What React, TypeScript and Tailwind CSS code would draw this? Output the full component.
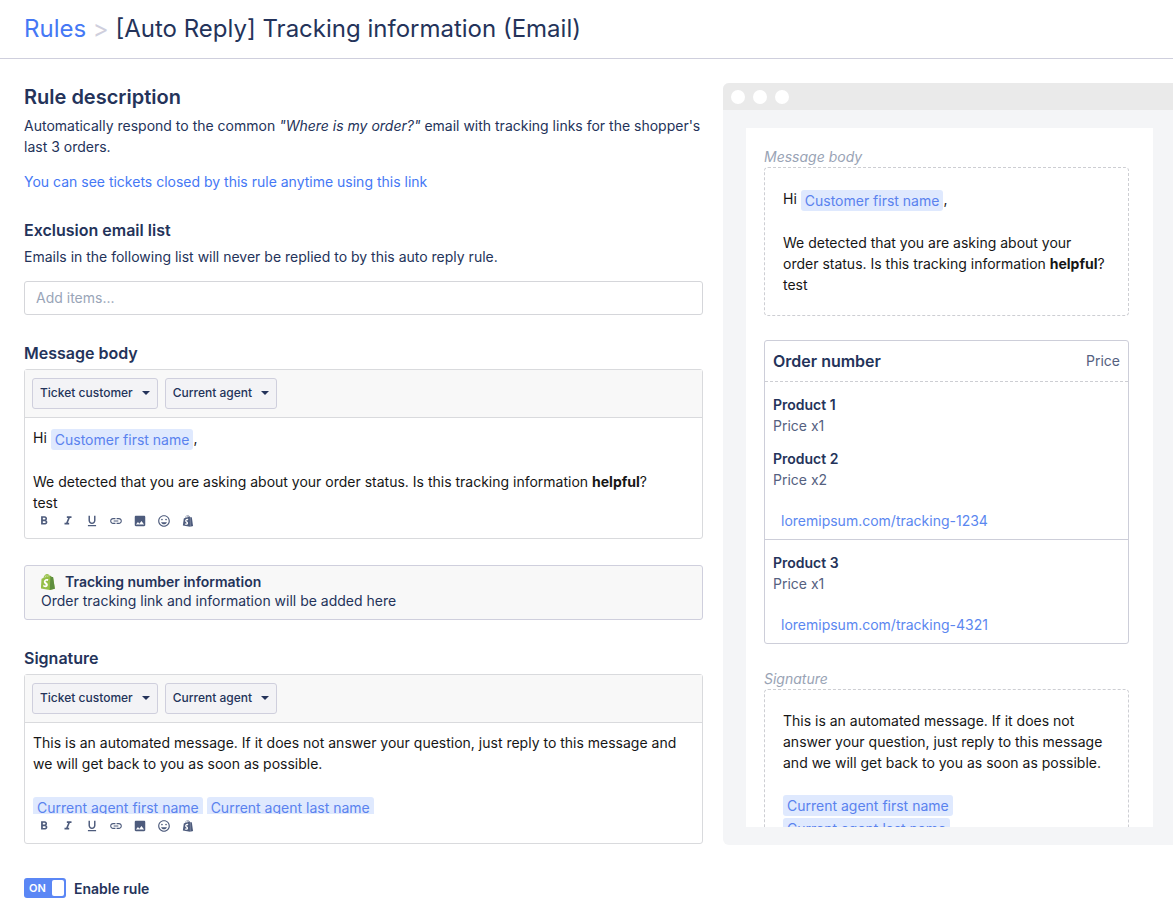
import { useState } from "react";
import type { ReactNode } from "react";
import { FaShopify } from "react-icons/fa";
import {
  MdFormatBold,
  MdFormatItalic,
  MdFormatUnderlined,
  MdImage,
  MdLink,
  MdOutlineInsertEmoticon,
} from "react-icons/md";

const tools = [
  { label: "Bold", Icon: MdFormatBold },
  { label: "Italic", Icon: MdFormatItalic },
  { label: "Underline", Icon: MdFormatUnderlined },
  { label: "Insert link", Icon: MdLink },
  { label: "Insert image", Icon: MdImage },
  { label: "Insert emoji", Icon: MdOutlineInsertEmoticon },
  { label: "Insert Shopify product", Icon: FaShopify },
];

function Variable({ children }: { children: ReactNode }) {
  return (
    <span className="inline-block rounded-[3px] bg-[#dfe9fe] px-1 align-middle whitespace-nowrap text-[#5a82ee]">
      {children}
    </span>
  );
}

function MenuButton({ children }: { children: ReactNode }) {
  return (
    <button
      type="button"
      aria-haspopup="menu"
      className="flex h-[31px] items-center gap-[9px] rounded-[3px] border border-[#cfcfdd] bg-[#f3f3f6] px-[7px] pb-0.5 text-xs font-medium text-[#24335a]"
    >
      {children}
      <svg viewBox="0 0 8 4" className="h-1 w-2" fill="currentColor" aria-hidden="true">
        <path d="M0 0h8L4 4z" />
      </svg>
    </button>
  );
}

function Editor({ id, title, children }: { id: string; title: string; children: ReactNode }) {
  return (
    <section className="mt-[26px]">
      <h2 id={id} className="text-base leading-6 font-semibold">
        {title}
      </h2>
      <div className="mt-1 rounded-[3px] border border-[#d9dadd]">
        <div className="flex gap-[7px] border-b border-[#d9dadd] bg-[#f8f8f8] px-[7px] py-2">
          <MenuButton>Ticket customer</MenuButton>
          <MenuButton>Current agent</MenuButton>
        </div>
        <div
          role="textbox"
          aria-multiline="true"
          aria-labelledby={id}
          contentEditable
          suppressContentEditableWarning
          className="h-[91px] overflow-hidden px-2 pt-[9px] text-[#161616] outline-none"
        >
          {children}
        </div>
        <div className="flex px-[7px] pb-[5px] text-[#4d5b7c]">
          {tools.map(({ label, Icon }) => (
            <button key={label} type="button" aria-label={label} className="flex size-6 items-center justify-center">
              <Icon className={label.includes("Shopify") ? "size-3" : "size-[14px]"} />
            </button>
          ))}
        </div>
      </div>
    </section>
  );
}

function ShopifyBag() {
  return (
    <svg viewBox="0 0 110 124" className="h-4 w-[14px]" aria-hidden="true">
      <path
        fill="#95bf47"
        d="M95 24c0-1-1-1-1-1l-10-1-8-8c-1-1-2-1-3-1l-4 1C66 7 62 1 54 1h-1C51-1 48-1 46 0 30 0 22 20 19 30L8 34c-3 1-3 1-4 4L-1 112l70 12 40-9z"
      />
      <path fill="#5e8e3e" d="M94 23l-10-1-8-8c-1-1-1-1-2-1l-5 111 40-9L95 24z" />
      <path
        d="M58 39l-5 15s-4-2-9-2c-8 0-8 5-8 6 0 7 18 9 18 25 0 12-8 20-18 20-13 0-19-8-19-8l3-11s7 6 12 6c4 0 5-3 5-5 0-9-15-9-15-23 0-12 8-24 25-24 7 0 11 1 11 1z"
        fill="#fff"
      />
      <path
        fill="#fff"
        fillOpacity="0.5"
        d="M26 28c4-12 11-20 20-21-4 4-7 10-9 18zM43 23c2-8 5-12 8-15 2 3 2 7 2 12zM58 7c4 1 5 5 7 9l-6 2c0-4 0-8-1-11z"
      />
    </svg>
  );
}

function PreviewBox({ title, children }: { title: string; children: ReactNode }) {
  return (
    <section>
      <h3 className="text-[#99a3b5] italic">{title}</h3>
      <div className="rounded border border-dashed border-[#cdced3] px-[18px] py-5 text-[#161616]">{children}</div>
    </section>
  );
}

function Product({ name, price }: { name: string; price: string }) {
  return (
    <div>
      <div className="font-semibold">{name}</div>
      <div className="text-[#55617f]">{price}</div>
    </div>
  );
}

function Shipment({ link, children }: { link: string; children: ReactNode }) {
  return (
    <div className="border-b border-[#cdced9] px-2 pt-3 pb-2 last:border-b-0">
      <div className="flex flex-col gap-3">{children}</div>
      <a href="#tracking" className="mt-5 block pl-2 text-[#5b87f0]">
        {link}
      </a>
    </div>
  );
}

function MessageBody() {
  return (
    <>
      <div>
        Hi <Variable>Customer first name</Variable>,
      </div>
      <br />
      <div>
        We detected that you are asking about your order status. Is this tracking information{" "}
        <b className="font-bold">helpful</b>?
      </div>
      <div>test</div>
    </>
  );
}

function SignatureBody() {
  return (
    <>
      <div>
        This is an automated message. If it does not answer your question, just reply to this message and we will get
        back to you as soon as possible.
      </div>
      <br />
      <div>
        <Variable>Current agent first name</Variable> <Variable>Current agent last name</Variable>
      </div>
    </>
  );
}

export default function App() {
  const [enabled, setEnabled] = useState(true);

  return (
    <div className="bg-white font-['Inter','Liberation_Sans',sans-serif] text-[14px] leading-[21px] text-[#24335a]">
      <header className="border-b border-[#cfcfdd] px-6 py-[11px]">
        <h1 className="text-2xl leading-9">
          <a href="#rules" className="text-[#4578f5]">
            Rules
          </a>{" "}
          <span className="text-[#cfcfdd]">&gt;</span> [Auto Reply] Tracking information (Email)
        </h1>
      </header>

      <main className="grid grid-cols-[679fr_450fr] gap-5 pt-6 pb-3 pl-6">
        <div className="min-w-0">
          <h2 className="text-xl leading-7 font-semibold">Rule description</h2>
          <p className="mt-1">
            Automatically respond to the common <i>"Where is my order?"</i> email with tracking links for the shopper's
            last 3 orders.
          </p>
          <a href="#tickets" className="mt-[14px] block text-[#4578f5]">
            You can see tickets closed by this rule anytime using this link
          </a>

          <h2 className="mt-[26px] text-base leading-6 font-semibold">
            <label htmlFor="exclusions">Exclusion email list</label>
          </h2>
          <p className="mt-1">Emails in the following list will never be replied to by this auto reply rule.</p>
          <input
            id="exclusions"
            type="text"
            placeholder="Add items..."
            className="mt-[14px] block h-[34px] w-full rounded-[3px] border border-[#d5d6da] px-[11px] pb-0.5 outline-none placeholder:text-[#99a5b8]"
          />

          <Editor id="message-body" title="Message body">
            <MessageBody />
          </Editor>

          <div className="mt-[26px] rounded-[3px] border border-[#cfcfdd] bg-[#f8f8f8] px-4 pt-[6px] pb-[9px] leading-[19px]">
            <div className="flex items-center gap-[10px] font-semibold">
              <ShopifyBag />
              Tracking number information
            </div>
            <p>Order tracking link and information will be added here</p>
          </div>

          <Editor id="signature" title="Signature">
            <SignatureBody />
          </Editor>

          <label className="mt-[34px] flex h-5 w-fit items-center gap-2 font-semibold">
            <input
              type="checkbox"
              role="switch"
              className="peer sr-only"
              checked={enabled}
              onChange={(e) => setEnabled(e.target.checked)}
            />
            <span className="flex h-5 w-[42px] items-center justify-between rounded-[3px] bg-[#5b87f5] pr-0.5 pl-[5px] text-[11px] text-white peer-focus-visible:ring-2">
              {enabled ? "ON" : "OFF"}
              <span className="h-4 w-3 rounded-[2px] bg-white" />
            </span>
            Enable rule
          </label>
        </div>

        <aside aria-label="Preview" className="min-w-0 self-start overflow-hidden rounded-l-md bg-[#f4f5f7]">
          <div className="flex h-[27px] items-center gap-2 bg-[#eaeaea] px-2">
            <span className="size-[14px] rounded-full bg-white" />
            <span className="size-[14px] rounded-full bg-white" />
            <span className="size-[14px] rounded-full bg-white" />
          </div>
          <div className="py-[18px] pr-5 pl-[23px]">
            <div className="flex h-[699px] flex-col gap-6 overflow-hidden bg-white px-[18px] pt-[18px] pr-6">
              <PreviewBox title="Message body">
                <MessageBody />
              </PreviewBox>

              <section className="rounded-[3px] border border-[#cdced9]">
                <div className="flex items-center justify-between border-b border-dashed border-[#cdced3] px-2 py-2">
                  <h3 className="text-base leading-6 font-semibold">Order number</h3>
                  <span className="text-[#55617f]">Price</span>
                </div>
                <Shipment link="loremipsum.com/tracking-1234">
                  <Product name="Product 1" price="Price x1" />
                  <Product name="Product 2" price="Price x2" />
                </Shipment>
                <Shipment link="loremipsum.com/tracking-4321">
                  <Product name="Product 3" price="Price x1" />
                </Shipment>
              </section>

              <PreviewBox title="Signature">
                <SignatureBody />
              </PreviewBox>
            </div>
          </div>
        </aside>
      </main>
    </div>
  );
}
